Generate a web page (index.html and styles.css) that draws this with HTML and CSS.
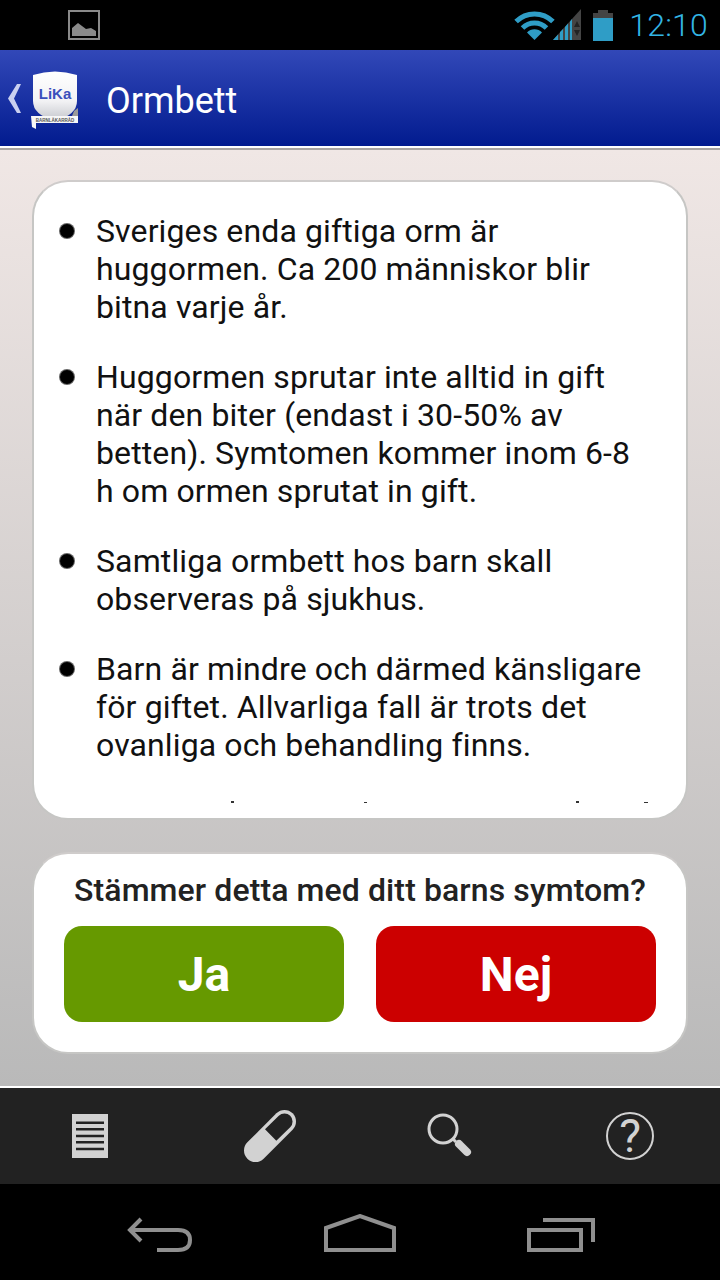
FILE: index.html
```html
<!DOCTYPE html>
<html lang="sv">
<head>
    <meta charset="UTF-8">
    <meta name="viewport" content="width=device-width, initial-scale=1.0">
    <title>Ormbett</title>
    <link rel="stylesheet" href="styles.css">
</head>
<body>
    <div class="phone">

        <!-- Statusrad -->
        <div class="status-bar">
            <svg class="notif-icon" width="34" height="30" viewBox="0 0 34 30">
                <rect x="1" y="1" width="30" height="28" fill="none" stroke="#8a8a8a" stroke-width="2"/>
                <path d="M4 26V18L10 13L18 19L23 18L28 21V26Z" fill="#8a8a8a"/>
            </svg>
            <div class="status-right">
                <svg width="42" height="32" viewBox="0 0 42 32">
                    <path d="M2.100 12.600A26 26 0 0 1 38.900 12.600" fill="none" stroke="#2f9dc6" stroke-width="5"/>
                    <path d="M8.500 19A17 17 0 0 1 32.500 19" fill="none" stroke="#2f9dc6" stroke-width="5"/>
                    <path d="M20.500 31L13 23.500A10.500 10.500 0 0 1 28 23.500Z" fill="#2f9dc6"/>
                </svg>
                <svg class="signal" width="29" height="32" viewBox="0 0 29 32">
                    <path d="M0 31L28 0V31Z" fill="#444"/>
                    <path d="M0 31L5 25.500V31Z M7 31V23L10 20V31Z M12 31V18L15 14.500V31Z M17 31V12.500L19 10V31Z" fill="#2f9dc6"/>
                    <path d="M24 12L27 18H21Z M24 27L27 21H21Z" fill="#222"/>
                </svg>
                <svg class="battery" width="22" height="31" viewBox="0 0 22 31">
                    <path d="M6 0H16V3H21V31H1V3H6Z" fill="#444"/>
                    <rect x="1" y="8" width="20" height="23" fill="#2f9dc6"/>
                </svg>
                <span class="clock">12:10</span>
            </div>
        </div>

        <!-- Titelrad -->
        <header class="app-bar">
            <svg class="back-chevron" width="16" height="30" viewBox="0 0 16 30">
                <path d="M14 0H10L1 14.500L10 29H14L7 14.500Z" fill="#c9d0f0"/>
            </svg>
            <svg class="logo" width="50" height="60" viewBox="0 0 50 60">
                <defs>
                    <linearGradient id="shield" x1="0" y1="0" x2="0" y2="1">
                        <stop offset="0" stop-color="#ffffff"/>
                        <stop offset="0.6" stop-color="#f2f2f4"/>
                        <stop offset="1" stop-color="#c4c6cc"/>
                    </linearGradient>
                </defs>
                <path d="M44 40L48 37V50H40Z" fill="#9a9a9a"/>
                <path d="M3 4Q25 -3 47 4V30Q47 44 25 50Q3 44 3 30Z" fill="url(#shield)"/>
                <text x="25" y="27.500" text-anchor="middle" class="logo-text">LiKa</text>
                <path d="M1 45H48V52H6V58L2 56Z" fill="#f7f7f7"/>
                <text x="25" y="50.500" text-anchor="middle" class="logo-sub">BARNLÄKARRÅD</text>
            </svg>
            <h1 class="app-title">Ormbett</h1>
        </header>

        <main class="content">
            <section class="card text-card">
                <ul class="facts">
                    <li>Sveriges enda giftiga orm är huggormen. Ca 200 människor blir bitna varje år.</li>
                    <li>Huggormen sprutar inte alltid in gift när den biter (endast i 30-50% av betten). Symtomen kommer inom 6-8 h om ormen sprutat in gift.</li>
                    <li>Samtliga ormbett hos barn skall observeras på sjukhus.</li>
                    <li>Barn är mindre och därmed känsligare för giftet. Allvarliga fall är trots det ovanliga och behandling finns.</li>
                </ul>
                <!-- Toppar av nästa rad som klipps av listan -->
                <svg class="clipped-tips" width="656" height="4" viewBox="0 0 656 4">
                    <rect x="197" y="1" width="3" height="2" fill="#333"/>
                    <rect x="330" y="2" width="3" height="1" fill="#333"/>
                    <rect x="542" y="1" width="3" height="2" fill="#333"/>
                    <rect x="610" y="2" width="4" height="1" fill="#333"/>
                </svg>
            </section>

            <section class="card question-card">
                <h2 class="question">Stämmer detta med ditt barns symtom?</h2>
                <div class="answer-row">
                    <button class="answer answer-yes">Ja</button>
                    <button class="answer answer-no">Nej</button>
                </div>
            </section>
        </main>

        <!-- Flikrad -->
        <nav class="tab-bar">
            <div class="tab">
                <svg width="36" height="44" viewBox="0 0 36 44">
                    <rect x="0" y="0" width="36" height="44" fill="#d2d2d2"/>
                    <path d="M4 8.700H32M4 15.300H32M4 22H32M4 28.300H32M4 35H32" stroke="#222" stroke-width="2.500"/>
                </svg>
            </div>
            <div class="tab">
                <svg width="52" height="52" viewBox="0 0 52 52">
                    <path d="M11.500 40.500L40.500 11.500" stroke="#d2d2d2" stroke-width="23" stroke-linecap="round"/>
                    <path d="M21 19.300L34.800 5.800A8 8 0 0 1 46.200 17.200L32.300 30.700Z" fill="#222"/>
                </svg>
            </div>
            <div class="tab">
                <svg width="46" height="46" viewBox="0 0 46 46">
                    <circle cx="16" cy="16" r="14" fill="none" stroke="#d2d2d2" stroke-width="3"/>
                    <path d="M26 26L29 29" stroke="#d2d2d2" stroke-width="3"/>
                    <path d="M32 31L40 39" stroke="#d2d2d2" stroke-width="8" stroke-linecap="round"/>
                </svg>
            </div>
            <div class="tab">
                <div class="help-icon">?</div>
            </div>
        </nav>

        <!-- Navigeringsknappar -->
        <div class="nav-bar">
            <svg width="68" height="36" viewBox="0 0 68 36">
                <path d="M15 3L4 14L15 25M4 14H52Q64 14 64 24Q64 34 52 34H31" fill="none" stroke="#8f8f8f" stroke-width="4"/>
            </svg>
            <svg width="74" height="38" viewBox="0 0 74 38">
                <path d="M3 14L37 2L71 14V36H3Z" fill="none" stroke="#8f8f8f" stroke-width="4"/>
            </svg>
            <svg width="70" height="36" viewBox="0 0 70 36">
                <path d="M17 4H67V26" fill="none" stroke="#8f8f8f" stroke-width="4"/>
                <rect x="3" y="14" width="52" height="20" fill="none" stroke="#8f8f8f" stroke-width="4"/>
            </svg>
        </div>
    </div>
</body>
</html>
```

FILE: styles.css
```css
* {
    box-sizing: border-box;
}

body {
    margin: 0;
    font-family: 'Roboto', sans-serif;
    background-color: #000000;
}

.phone {
    width: 720px;
    height: 1280px;
    display: flex;
    flex-direction: column;
    overflow: hidden;
}

/* Statusrad */
.status-bar {
    height: 50px;
    flex: none;
    background-color: #000000;
    display: flex;
    justify-content: space-between;
    align-items: center;
    padding: 0 12px 0 68px;
}

.notif-icon {
    display: block;
}

.status-right {
    display: flex;
    align-items: center;
}

.signal {
    margin-left: -3px;
}

.battery {
    margin-left: 10px;
}

.clock {
    color: #33b5e5;
    font-size: 32px;
    font-weight: 300;
    margin-left: 15px;
    letter-spacing: 0.2px;
}

/* Titelrad */
.app-bar {
    height: 100px;
    flex: none;
    display: flex;
    align-items: center;
    padding: 0 0 2px 7px;
    background: linear-gradient(#3248b8, #011a8e);
    border-bottom: 2px solid #a8a4a2;
    box-shadow: inset 0 -2px 0 #ffffff;
}

.back-chevron {
    margin-top: 2px;
}

.logo {
    margin-left: 7px;
    margin-top: 6px;
}

.logo-text {
    font-family: 'Liberation Sans', sans-serif;
    font-size: 15px;
    font-weight: bold;
    fill: #3a50bc;
}

.logo-sub {
    font-family: 'Liberation Sans', sans-serif;
    font-size: 4.500px;
    font-weight: bold;
    fill: #555555;
}

.app-title {
    margin: 6px 0 0 26px;
    font-size: 36px;
    font-weight: 400;
    color: #ffffff;
}

/* Innehåll */
.content {
    flex: 1;
    padding: 30px 32px 32px;
    display: flex;
    flex-direction: column;
    gap: 32px;
    background: linear-gradient(#f0e7e5, #b9b9b9);
}

.card {
    background-color: #ffffff;
    border: 2px solid #c6c6c4;
    border-top-color: #cfcccb;
    border-radius: 36px;
}

.text-card {
    height: 640px;
    flex: none;
    overflow: hidden;
    padding: 30px 36px 0 29px;
    position: relative;
}

.facts {
    list-style: none;
    margin: 0;
    padding: 0;
    color: #111111;
    font-size: 32px;
    line-height: 38px;
    letter-spacing: 0.12px;
}

.facts li {
    position: relative;
    padding-left: 33px;
    margin-bottom: 32px;
}

.facts li::before {
    content: "";
    position: absolute;
    left: -3px;
    top: 12px;
    width: 14px;
    height: 14px;
    border-radius: 50%;
    background-color: #000000;
    box-shadow: 0 0 0 1px #666666;
}

.clipped-tips {
    position: absolute;
    left: 0;
    top: 618px;
}

.question-card {
    flex: 1;
    padding: 16px 30px 0;
}

.question {
    margin: 0 0 16px;
    text-align: center;
    font-size: 32px;
    line-height: 40px;
    font-weight: 500;
    letter-spacing: 0.1px;
    color: #222222;
    white-space: nowrap;
}

.answer-row {
    display: flex;
    gap: 32px;
}

.answer {
    flex: 1;
    height: 96px;
    border: none;
    border-radius: 18px;
    font-family: 'Roboto', sans-serif;
    font-size: 48px;
    font-weight: 700;
    color: #ffffff;
}

.answer-yes {
    background-color: #669900;
}

.answer-no {
    background-color: #cc0000;
}

/* Flikrad */
.tab-bar {
    height: 98px;
    flex: none;
    display: flex;
    background-color: #222222;
    border-top: 2px solid #ffffff;
}

.tab {
    flex: 1;
    display: flex;
    align-items: center;
    justify-content: center;
}

.help-icon {
    width: 48px;
    height: 48px;
    border: 2px solid #d2d2d2;
    border-radius: 50%;
    color: #d2d2d2;
    font-size: 46px;
    font-weight: 400;
    line-height: 44px;
    text-align: center;
}

/* Navigeringsknappar */
.nav-bar {
    height: 96px;
    flex: none;
    background-color: #000000;
    display: flex;
    gap: 129px;
    align-items: flex-end;
    padding: 0 0 28px 126px;
}
```
